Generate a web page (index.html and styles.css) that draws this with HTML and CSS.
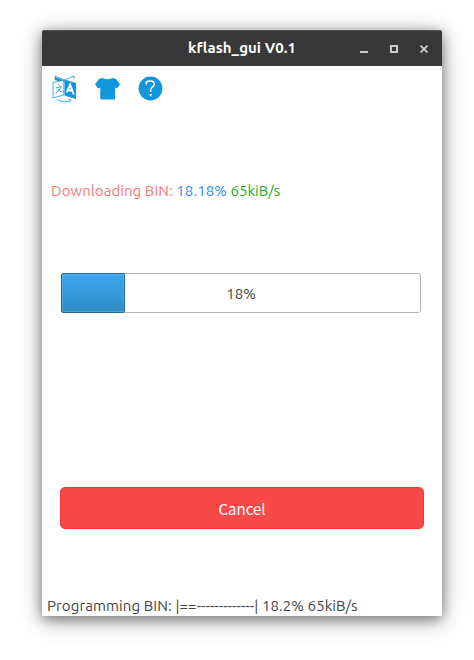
FILE: index.html
```html
<!DOCTYPE html>
<html lang="en">
<head>
<meta charset="utf-8">
<title>kflash_gui V0.1</title>
<link rel="stylesheet" href="styles.css">
</head>
<body>
<main class="window">
  <header class="titlebar">
    <h1 class="title">kflash_gui V0.1</h1>
    <div class="controls">
      <svg width="10" height="10" viewBox="0 0 10 10"><path d="M1 7h8v2H1z" fill="#c8c8c8"/></svg>
      <svg width="10" height="10" viewBox="0 0 10 10"><path d="M2 2h6v6H2z" fill="none" stroke="#c8c8c8" stroke-width="2"/></svg>
      <svg width="10" height="10" viewBox="0 0 10 10"><path d="M1.6 1.6l6.8 6.8M8.4 1.6L1.6 8.4" stroke="#c8c8c8" stroke-width="2"/></svg>
    </div>
  </header>
  <nav class="toolbar">
    <svg width="26" height="28" viewBox="0 0 26 28">
      <path d="M4 4V1.200L13.500 5 23 1V4" fill="none" stroke="#1296db" stroke-width=".8"/>
      <path d="M4 2L13.500 5.500V8L4 5z" fill="#1296db"/>
      <path d="M2 7.500L12.800 5.200V20L2 23z" fill="#fff" stroke="#1296db" stroke-width=".8"/>
      <path d="M13.500 4.500L25 8V24L13.500 20.500z" fill="#1296db"/>
      <path d="M7 9L8.500 10.500M5 13L10.500 11.500Q8.500 16 4.500 18.500M7 14Q8.500 16.500 11 17" fill="none" stroke="#1296db" stroke-width=".9"/>
      <path d="M15.800 17.500L19.100 9.500 22.800 19.500M17.300 15l4.200 1" fill="none" stroke="#fff" stroke-width="1.900"/>
      <path d="M6.500 24.500Q12.500 28.500 19.500 25.500M17.500 24l2.500 1.400-1.500 2" fill="none" stroke="#1296db" stroke-width=".8"/>
    </svg>
    <svg width="26" height="28" viewBox="0 0 26 28"><path d="M8.500 3Q13.500 5.400 18.500 3L22 4 26 9.200 23 13.500 21 12.500V23.500Q21 24.500 20 24.500H7.300Q6.300 24.500 6.300 23.500V12.500L4 13.500 1.100 9.200 5 4z" fill="#1296db"/></svg>
    <svg width="26" height="28" viewBox="0 0 26 28"><circle cx="13.500" cy="13.500" r="11.900" fill="#1296db"/><path d="M9.300 9.500V7.200Q11 6 13.500 6 17.300 6 17.300 9.300 17.300 11 15.300 12.200 13.600 13.200 13.600 16.200V17" fill="none" stroke="#fff" stroke-width="1.500"/><path d="M12.600 19h2v2.200h-2z" fill="#fff"/></svg>
  </nav>
  <p class="status"><span class="stage">Downloading BIN:</span> <span class="percent">18.18%</span> <span class="speed">65kiB/s</span></p>
  <div class="progress"><div class="fill"></div><span class="value">18%</span></div>
  <button class="cancel"><span>Cancel</span></button>
  <footer class="log">Programming BIN: |==-------------| 18.2% 65kiB/s</footer>
</main>
</body>
</html>
```
FILE: styles.css
```css
* { box-sizing: border-box; }
body {
  margin: 0;
  padding: 30px 32px 44px 42px;
  height: 660px;
  background: #fff;
  overflow: hidden;
  font: 15px/20px Ubuntu, "Noto Sans", sans-serif;
  color: #434343;
}
.window {
  display: flex;
  flex-direction: column;
  width: 400px;
  height: 586px;
  background: #fff;
  border-radius: 2px 2px 0 0;
  box-shadow: 0 3px 14px rgba(0, 0, 0, .5), 0 5px 28px rgba(0, 0, 0, .2);
}
.titlebar {
  display: grid;
  grid-template-columns: 1fr auto 1fr;
  align-items: center;
  height: 36px;
  background: #383838;
  border-top: 1px solid #525855;
  border-radius: 2px 2px 0 0;
}
.title {
  grid-column: 2;
  margin: -2px 0 0;
  color: #fff;
  font-size: 15px;
  font-weight: 700;
  letter-spacing: .05px;
  white-space: nowrap;
}
.controls { display: flex; justify-content: flex-end; gap: 20px; padding-right: 13px; }
.toolbar { display: flex; gap: 17px; padding: 9px 0 0 9px; }
.toolbar svg, .controls svg { display: block; }
.status { margin: 78px 0 0 9px; white-space: nowrap; letter-spacing: .065px; }
.stage { color: #fa7878; }
.percent { color: #2d8cff; }
.speed { color: #19ae2b; }
.progress {
  position: relative;
  display: flex;
  width: 360px;
  height: 40px;
  margin: 72px 0 0 19px;
  border: 1px solid #b4b4b4;
  border-radius: 3px;
}
.fill {
  width: 64px;
  height: 40px;
  margin: -1px;
  border: 1px solid #216795;
  border-radius: 2px;
  background: linear-gradient(#3ca8ef, #308cc6);
  box-shadow: inset 0 0 0 1px rgba(105, 190, 240, .45);
}
.value { position: absolute; inset: 0; text-align: center; line-height: 40px; }
.cancel {
  width: 364px;
  height: 42px;
  margin: 174px 0 0 18px;
  padding: 2px 0 0;
  border: 1px solid #ff3535;
  border-radius: 5px;
  background: #f84848;
  color: #fff;
  font: 15px/38px "Noto Sans CJK SC", sans-serif;
}
.log { margin: 67px 0 0 5px; white-space: nowrap; letter-spacing: .095px; }
```
